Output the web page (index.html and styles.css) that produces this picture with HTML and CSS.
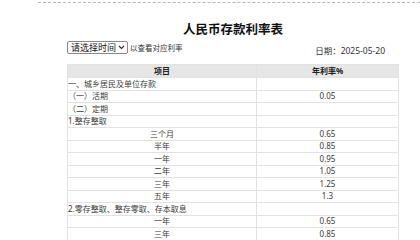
FILE: index.html
```html
<!DOCTYPE html>
<html>
<head>
<meta charset="utf-8">
<link rel="stylesheet" href="styles.css">
</head>
<body>
<div class="frame">
  <div class="page">
    <h1 class="title">人民币存款利率表</h1>
    <div class="toolbar">
      <div class="picker">
        <span class="select">请选择时间<svg class="chev" width="7" height="5" viewBox="0 0 7 5"><path d="M1 1 L3.5 3.5 L6 1" fill="none" stroke="#333" stroke-width="1.2"/></svg></span>
        <span class="hint">以查看对应利率</span>
      </div>
      <div class="date">日期：2025-05-20</div>
    </div>
    <table class="rates">
      <thead>
        <tr><th class="c1">项目</th><th>年利率%</th></tr>
      </thead>
      <tbody>
        <tr><td class="l">一、城乡居民及单位存款</td><td></td></tr>
        <tr><td class="l">（一）活期</td><td>0.05</td></tr>
        <tr><td class="l">（二）定期</td><td></td></tr>
        <tr><td class="l">1.整存整取</td><td></td></tr>
        <tr><td>三个月</td><td>0.65</td></tr>
        <tr><td>半年</td><td>0.85</td></tr>
        <tr><td>一年</td><td>0.95</td></tr>
        <tr><td>二年</td><td>1.05</td></tr>
        <tr><td>三年</td><td>1.25</td></tr>
        <tr><td>五年</td><td>1.3</td></tr>
        <tr><td class="l">2.零存整取、整存零取、存本取息</td><td></td></tr>
        <tr><td>一年</td><td>0.65</td></tr>
        <tr><td>三年</td><td>0.85</td></tr>
      </tbody>
    </table>
  </div>
</div>
</body>
</html>
```
FILE: styles.css
```css
html, body {
  margin: 0;
  padding: 0;
  background: #fff;
  overflow: hidden;
}
body {
  font-family: "Noto Sans", "Noto Sans CJK SC", sans-serif;
  color: #222;
  width: 420px;
  height: 240px;
}
.frame {
  margin-left: 38px;
  margin-top: 2px;
  border-top: 1px dashed #b8b8b8;
  height: 237px;
}
.page {
  width: 332px;
  margin-left: 29px;
  padding-top: 17px;
}
.title {
  margin: 0;
  font-size: 12.5px;
  line-height: 20px;
  font-weight: 700;
  text-align: center;
  color: #111;
}
.toolbar {
  display: flex;
  justify-content: space-between;
  align-items: flex-end;
  margin-top: 1px;
  height: 13px;
}
.picker {
  display: flex;
  align-items: center;
  gap: 2px;
}
.select {
  display: inline-flex;
  align-items: center;
  gap: 2px;
  height: 11px;
  padding: 0 2px 0 3px;
  border: 1px solid #8a8a8a;
  border-radius: 2px;
  font-size: 9px;
  line-height: 11px;
  color: #111;
  background: #fff;
}
.chev { display: block; }
.hint {
  font-size: 7.5px;
  color: #333;
}
.date {
  font-size: 8.5px;
  color: #333;
  margin-right: 14px;
  margin-bottom: -2px;
}
.rates {
  margin-top: 10px;
  width: 332px;
  border-collapse: collapse;
  table-layout: fixed;
  font-size: 8px;
  color: #3a3a3a;
}
.rates th, .rates td {
  border: 1px solid #e2e2e2;
  padding: 0;
  text-align: center;
  height: 11.5px;
  line-height: 10.5px;
  white-space: nowrap;
  box-sizing: border-box;
}
.rates td { height: 12.5px; }
.rates th {
  background: #e6e6e6;
  font-weight: 700;
  color: #222;
  height: 13px;
}
.rates .c1 { width: 189px; }
.rates td.l { text-align: left; }
```
